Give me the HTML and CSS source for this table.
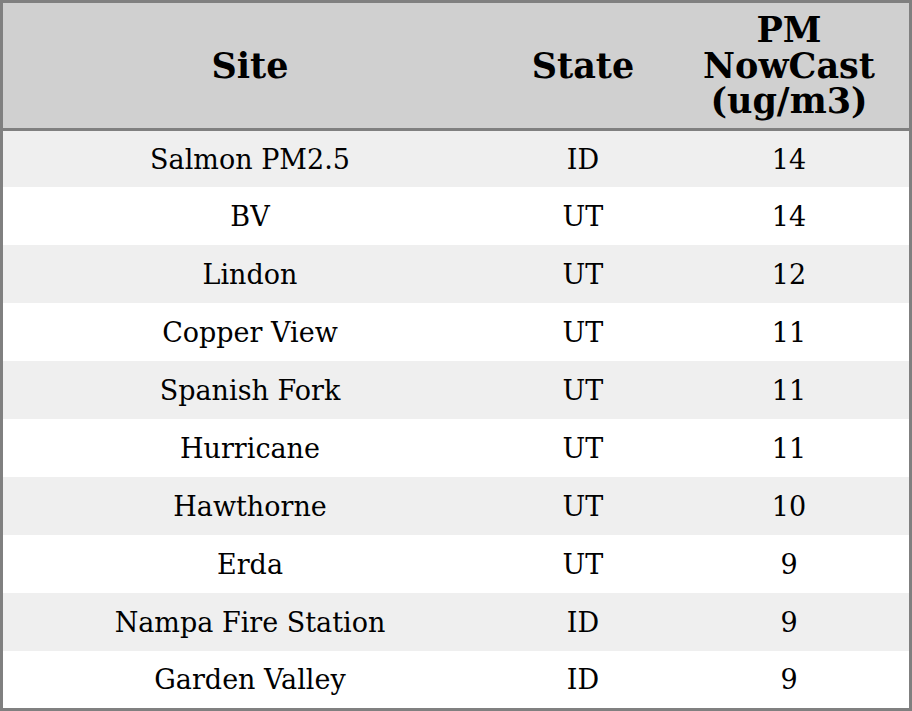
FILE: index.html
```html
<!DOCTYPE html>
<html>
<head>
<meta charset="utf-8">
<link rel="stylesheet" href="styles.css">
</head>
<body>
<table class="aq">
<colgroup><col class="c-site"><col class="c-state"><col class="c-pm"></colgroup>
<thead>
<tr><th>Site</th><th>State</th><th>PM<br>NowCast<br>(ug/m3)</th></tr>
</thead>
<tbody>
<tr><td>Salmon PM2.5</td><td>ID</td><td>14</td></tr>
<tr><td>BV</td><td>UT</td><td>14</td></tr>
<tr><td>Lindon</td><td>UT</td><td>12</td></tr>
<tr><td>Copper View</td><td>UT</td><td>11</td></tr>
<tr><td>Spanish Fork</td><td>UT</td><td>11</td></tr>
<tr><td>Hurricane</td><td>UT</td><td>11</td></tr>
<tr><td>Hawthorne</td><td>UT</td><td>10</td></tr>
<tr><td>Erda</td><td>UT</td><td>9</td></tr>
<tr><td>Nampa Fire Station</td><td>ID</td><td>9</td></tr>
<tr><td>Garden Valley</td><td>ID</td><td>9</td></tr>
</tbody>
</table>
</body>
</html>
```
FILE: styles.css
```css
html, body {
  margin: 0;
  padding: 0;
  background: #ffffff;
}
.aq {
  width: 912px;
  height: 711px;
  border-collapse: separate;
  border-spacing: 0;
  border: 3px solid #808080;
  box-sizing: border-box;
  table-layout: fixed;
  font-family: "DejaVu Serif", serif;
  color: #000;
}
.c-site { width: 494px; }
.c-state { width: 172px; }
.c-pm { width: 240px; }
.aq th {
  background: #d0d0d0;
  font-size: 35px;
  font-weight: bold;
  line-height: 35.5px;
  height: 128px;
  box-sizing: border-box;
  padding: 0;
  text-align: center;
  vertical-align: middle;
  border-bottom: 3px solid #808080;
}
.aq td {
  font-size: 27px;
  height: 58px;
  padding: 0;
  text-align: center;
  vertical-align: middle;
}
.aq tbody tr:first-child td { height: 56px; }
.aq tbody tr:last-child td { height: 57px; }
.aq tbody tr:nth-child(odd) td { background: #efefef; }
.aq tbody tr:nth-child(even) td { background: #ffffff; }
```
